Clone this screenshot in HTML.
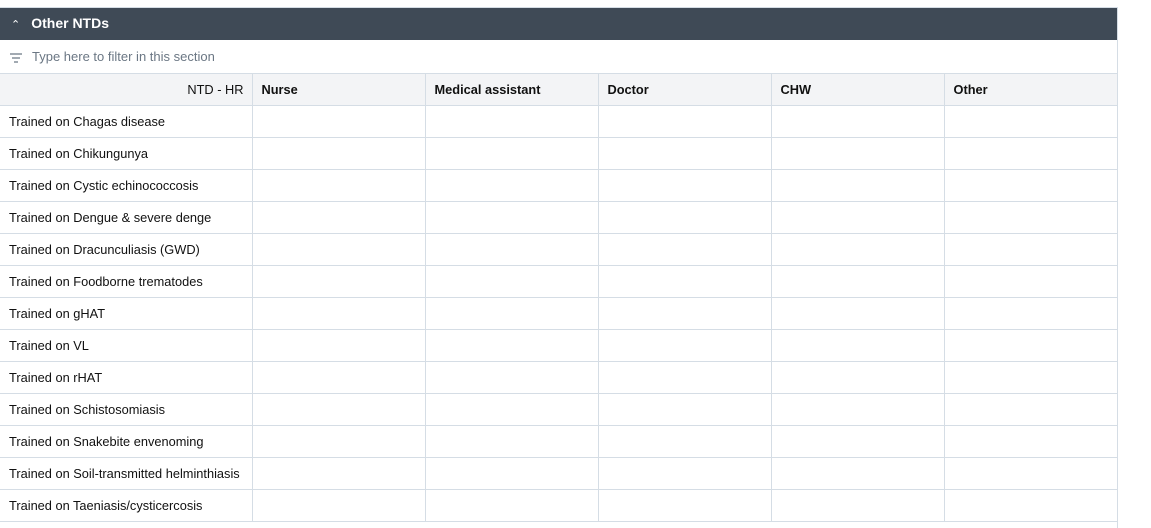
<!DOCTYPE html><html><head><style>
body{margin:0;width:1151px;height:501px;overflow:hidden;background:#fff;font-family:"Liberation Sans",sans-serif;position:relative}
.wrap{position:absolute;left:0;top:7px;width:1117px;height:520px;border-top:1px solid #d5dde5;border-right:1px solid #d5dde5}
.bar{height:32px;background:#3f4a56;color:#fff;font-size:14px;line-height:31px;font-weight:bold}
.bar span{margin-left:11px;font-weight:normal;font-size:11px;margin-right:11px}
.filter{height:33px;border-bottom:1px solid #d5dde5;color:#6b7784;font-size:13px;line-height:34px;position:relative}
.filter svg{position:absolute;left:9px;top:13px}
.filter div{position:absolute;left:32px}
table{border-collapse:collapse;table-layout:fixed;width:1117px;font-size:12.8px;color:#111}
td{height:31px;border-right:1px solid #d5dde5;border-bottom:1px solid #d5dde5;padding:0 0 0 9px;white-space:nowrap;overflow:hidden}
tr.h td{background:#f3f4f6;font-weight:bold}
tr.h td:first-child{text-align:right;padding-right:8px;font-weight:normal}
td:last-child{border-right:none}
</style></head><body><div class="wrap">
<div class="bar"><span>&#8963;</span>Other NTDs</div>
<div class="filter"><svg width="14" height="10"><path d="M1 1h12M3 5h8M5 9h4" stroke="#6b7784" stroke-width="1.3"/></svg><div>Type here to filter in this section</div></div>
<table><colgroup><col style="width:252px"><col style="width:173px"><col style="width:173px"><col style="width:173px"><col style="width:173px"><col></colgroup>
<tr class="h"><td>NTD - HR</td><td>Nurse</td><td>Medical assistant</td><td>Doctor</td><td>CHW</td><td>Other</td></tr>
<tr><td>Trained on Chagas disease</td><td></td><td></td><td></td><td></td><td></td></tr>
<tr><td>Trained on Chikungunya</td><td></td><td></td><td></td><td></td><td></td></tr>
<tr><td>Trained on Cystic echinococcosis</td><td></td><td></td><td></td><td></td><td></td></tr>
<tr><td>Trained on Dengue &amp; severe denge</td><td></td><td></td><td></td><td></td><td></td></tr>
<tr><td>Trained on Dracunculiasis (GWD)</td><td></td><td></td><td></td><td></td><td></td></tr>
<tr><td>Trained on Foodborne trematodes</td><td></td><td></td><td></td><td></td><td></td></tr>
<tr><td>Trained on gHAT</td><td></td><td></td><td></td><td></td><td></td></tr>
<tr><td>Trained on VL</td><td></td><td></td><td></td><td></td><td></td></tr>
<tr><td>Trained on rHAT</td><td></td><td></td><td></td><td></td><td></td></tr>
<tr><td>Trained on Schistosomiasis</td><td></td><td></td><td></td><td></td><td></td></tr>
<tr><td>Trained on Snakebite envenoming</td><td></td><td></td><td></td><td></td><td></td></tr>
<tr><td>Trained on Soil-transmitted helminthiasis</td><td></td><td></td><td></td><td></td><td></td></tr>
<tr><td>Trained on Taeniasis/cysticercosis</td><td></td><td></td><td></td><td></td><td></td></tr>
</table></div></body></html>
